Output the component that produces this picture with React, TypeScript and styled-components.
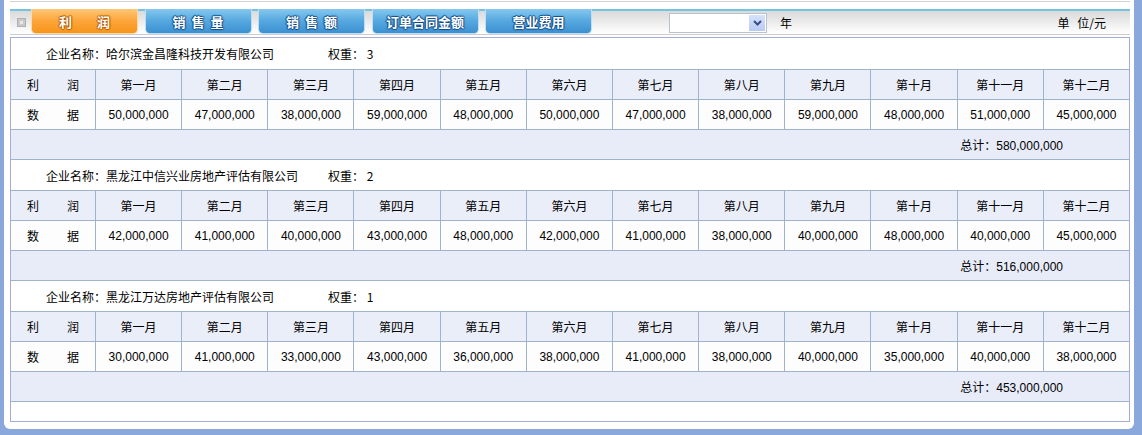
import React from "react";
import styled, { createGlobalStyle, css } from "styled-components";

const GlobalStyle = createGlobalStyle`
  html, body { margin: 0; padding: 0; }
  body {
    background: #8aa8dc;
    font-family: "Liberation Sans", "Noto Sans CJK SC", sans-serif;
    font-size: 12px;
    color: #000;
  }
`;

const Panel = styled.div`
  box-sizing: border-box;
  width: 1130px;
  margin-left: 4px;
  background: #fff;
  border-radius: 0 0 6px 6px;
  padding: 0 4px 7px 6px;
`;

const TopStrip = styled.div`
  box-sizing: border-box;
  height: 9px;
  padding-top: 1px;
  &::before {
    content: "";
    display: block;
    height: 1px;
    background: #d2d2d2;
  }
`;

const Toolbar = styled.div`
  box-sizing: border-box;
  height: 26px;
  display: flex;
  align-items: stretch;
  border-bottom: 1px solid #cdcdcd;
  background: linear-gradient(
    #74c4e0 0px,
    #74c4e0 2px,
    #dadada 2px,
    #e6e6e6 10px,
    #f8f8f8 20px,
    #ffffff 25px
  );
`;

const CornerIcon = styled.div`
  box-sizing: border-box;
  width: 9px;
  height: 9px;
  margin: 0 5px 0 7px;
  align-self: center;
  position: relative;
  top: 1px;
  background: #c9c9c9;
  border: 1px solid #b0b0b0;
  display: flex;
  align-items: center;
  justify-content: center;
  &::after {
    content: "";
    width: 3px;
    height: 3px;
    background: #e8e8e8;
  }
`;

const Tabs = styled.div`
  display: flex;
  gap: 6.5px;
`;

const Tab = styled.div<{ $active?: boolean }>`
  box-sizing: border-box;
  width: 107px;
  height: 25px;
  display: flex;
  align-items: center;
  justify-content: center;
  border: 1px solid;
  border-top: none;
  border-radius: 0 0 5px 5px;
  color: #fff;
  font-family: "Noto Sans CJK SC", sans-serif;
  font-weight: 700;
  font-size: 13px;
  ${(p) =>
    p.$active
      ? css`
          background: linear-gradient(#ffc777 0%, #fca53a 50%, #f6951a 100%);
          border-color: #ffd8a2;
          text-shadow: 1px 0 1px #b25a00, -1px 0 1px #b25a00, 0 1px 1px #b25a00,
            0 -1px 1px #b25a00;
        `
      : css`
          background: linear-gradient(#86c8ef 0%, #55a8df 50%, #3c90d0 100%);
          border-color: #bcdff5;
          text-shadow: 1px 0 1px #124a86, -1px 0 1px #124a86, 0 1px 1px #124a86,
            0 -1px 1px #124a86;
        `}
`;

const TabLabel = styled.span<{ $gap: number }>`
  display: flex;
  gap: ${(p) => p.$gap}px;
`;

const SelectBox = styled.div`
  box-sizing: border-box;
  width: 98px;
  height: 20px;
  margin-left: 77px;
  align-self: center;
  position: relative;
  top: 1px;
  background: #fff;
  border: 1px solid #b9c1cc;
  display: flex;
  justify-content: flex-end;
  padding: 1px;
`;

const SelectButton = styled.div`
  width: 16px;
  height: 16px;
  background: linear-gradient(#d6e2fb, #b7cbf4);
  display: flex;
  align-items: center;
  justify-content: center;
`;

const ToolText = styled.span<{ $push?: boolean }>`
  align-self: center;
  position: relative;
  top: 1px;
  font-family: "Noto Sans CJK SC", sans-serif;
  word-spacing: 5px;
  margin-left: ${(p) => (p.$push ? "auto" : "13px")};
  margin-right: ${(p) => (p.$push ? "24px" : "0")};
`;

const Gap = styled.div`
  height: 2px;
`;

const Box = styled.div`
  border: 1px solid #a5acd6;
`;

const CompanyRow = styled.div`
  box-sizing: border-box;
  height: 31px;
  display: flex;
  align-items: center;
  padding-left: 35px;
  background: #fff;
  border-top: 1px solid #9fb3ce;
  font-family: "Noto Sans CJK SC", sans-serif;
  &:first-child {
    border-top: none;
  }
`;

const CompanyName = styled.span`
  width: 282px;
`;

const GridRow = styled.div<{ $tone: "head" | "data" }>`
  box-sizing: border-box;
  height: 30px;
  display: grid;
  grid-template-columns: 84px repeat(12, 1fr);
  border-top: 1px solid #9fb3ce;
  background: ${(p) => (p.$tone === "head" ? "#eaeef9" : "#fdfdfd")};
`;

const Cell = styled.div<{ $cjk?: boolean }>`
  display: flex;
  align-items: center;
  justify-content: center;
  border-left: 1px solid #9fb3ce;
  white-space: nowrap;
  ${(p) => p.$cjk && css`font-family: "Noto Sans CJK SC", sans-serif;`}
  &:first-child {
    border-left: none;
  }
`;

const LabelCell = styled(Cell)`
  justify-content: space-between;
  padding: 0 16px;
  font-family: "Noto Sans CJK SC", sans-serif;
`;

const TotalRow = styled.div`
  box-sizing: border-box;
  height: 30px;
  display: flex;
  align-items: center;
  justify-content: flex-end;
  padding-right: 66px;
  border-top: 1px solid #9fb3ce;
  background: #e8ecf9;
`;

const Filler = styled.div`
  box-sizing: border-box;
  height: 20px;
  border-top: 1px solid #9fb3ce;
  background: #fff;
`;

const months = [
  "第一月",
  "第二月",
  "第三月",
  "第四月",
  "第五月",
  "第六月",
  "第七月",
  "第八月",
  "第九月",
  "第十月",
  "第十一月",
  "第十二月",
];

type Company = {
  name: string;
  weight: number;
  values: number[];
  total: number;
};

const companies: Company[] = [
  {
    name: "哈尔滨金昌隆科技开发有限公司",
    weight: 3,
    values: [50, 47, 38, 59, 48, 50, 47, 38, 59, 48, 51, 45],
    total: 580,
  },
  {
    name: "黑龙江中信兴业房地产评估有限公司",
    weight: 2,
    values: [42, 41, 40, 43, 48, 42, 41, 38, 40, 48, 40, 45],
    total: 516,
  },
  {
    name: "黑龙江万达房地产评估有限公司",
    weight: 1,
    values: [30, 41, 33, 43, 36, 38, 41, 38, 40, 35, 40, 38],
    total: 453,
  },
];

const fmt = (m: number) => `${m},000,000`;

const tabs = [
  { label: "利润", gap: 25, active: true },
  { label: "销售量", gap: 6 },
  { label: "销售额", gap: 6 },
  { label: "订单合同金额", gap: 0 },
  { label: "营业费用", gap: 0 },
];

export default function App() {
  return (
    <>
      <GlobalStyle />
      <Panel>
        <TopStrip />
        <Toolbar>
          <CornerIcon />
          <Tabs>
            {tabs.map((t) => (
              <Tab key={t.label} $active={t.active}>
                <TabLabel $gap={t.gap}>
                  {t.label.split("").map((c, i) => (
                    <span key={i}>{c}</span>
                  ))}
                </TabLabel>
              </Tab>
            ))}
          </Tabs>
          <SelectBox>
            <SelectButton>
              <svg width="9" height="6" viewBox="0 0 9 6">
                <path d="M1 1 L4.5 4.5 L8 1" fill="none" stroke="#3a4f80" strokeWidth="2" />
              </svg>
            </SelectButton>
          </SelectBox>
          <ToolText>年</ToolText>
          <ToolText $push>单 位/元</ToolText>
        </Toolbar>
        <Gap />
        <Box>
          {companies.map((c) => (
            <React.Fragment key={c.name}>
              <CompanyRow>
                <CompanyName>企业名称：{c.name}</CompanyName>
                <span>权重： {c.weight}</span>
              </CompanyRow>
              <GridRow $tone="head">
                <LabelCell>
                  <span>利</span>
                  <span>润</span>
                </LabelCell>
                {months.map((m) => (
                  <Cell key={m} $cjk>
                    {m}
                  </Cell>
                ))}
              </GridRow>
              <GridRow $tone="data">
                <LabelCell>
                  <span>数</span>
                  <span>据</span>
                </LabelCell>
                {c.values.map((v, i) => (
                  <Cell key={i}>{fmt(v)}</Cell>
                ))}
              </GridRow>
              <TotalRow>总计：{fmt(c.total)}</TotalRow>
            </React.Fragment>
          ))}
          <Filler />
        </Box>
      </Panel>
    </>
  );
}
